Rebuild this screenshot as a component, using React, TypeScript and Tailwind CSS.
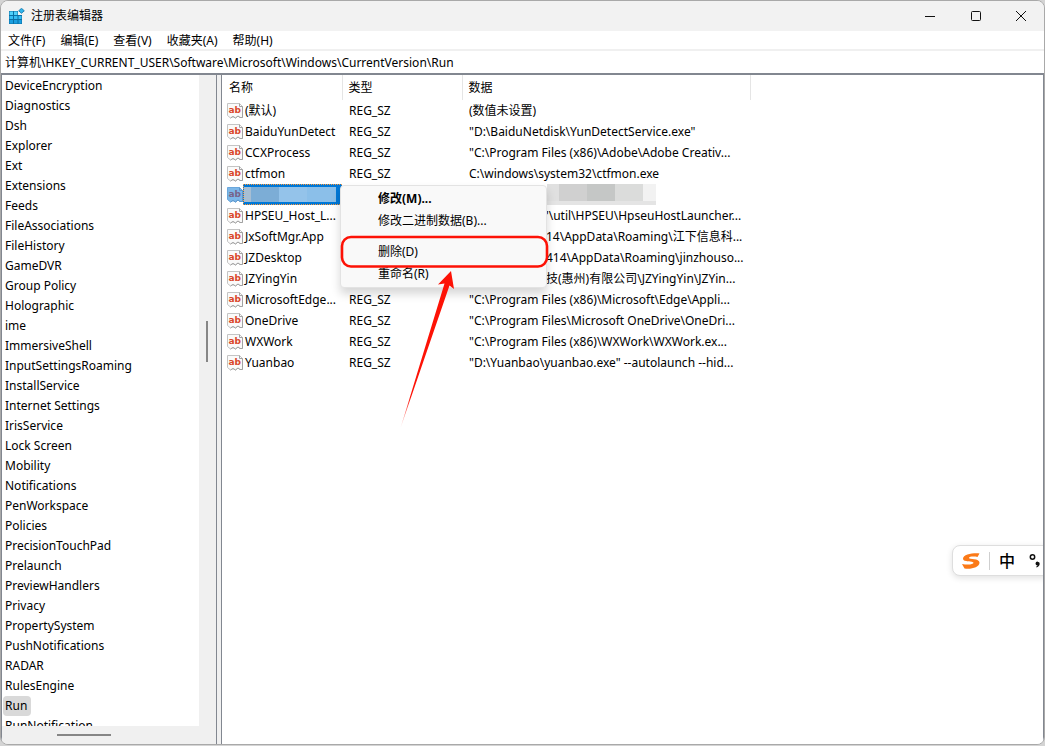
import React from 'react';

const menus = ['文件(F)', '编辑(E)', '查看(V)', '收藏夹(A)', '帮助(H)'];

const keys = [
  'DeviceEncryption', 'Diagnostics', 'Dsh', 'Explorer', 'Ext', 'Extensions', 'Feeds', 'FileAssociations',
  'FileHistory', 'GameDVR', 'Group Policy', 'Holographic', 'ime', 'ImmersiveShell', 'InputSettingsRoaming',
  'InstallService', 'Internet Settings', 'IrisService', 'Lock Screen', 'Mobility', 'Notifications',
  'PenWorkspace', 'Policies', 'PrecisionTouchPad', 'Prelaunch', 'PreviewHandlers', 'Privacy',
  'PropertySystem', 'PushNotifications', 'RADAR', 'RulesEngine', 'Run', 'RunNotification',
];

type Entry = { name: string; type: string; data: string; shifted?: boolean; selected?: boolean };

const entries: Entry[] = [
  { name: '(默认)', type: 'REG_SZ', data: '(数值未设置)' },
  { name: 'BaiduYunDetect', type: 'REG_SZ', data: '"D:\\BaiduNetdisk\\YunDetectService.exe"' },
  { name: 'CCXProcess', type: 'REG_SZ', data: '"C:\\Program Files (x86)\\Adobe\\Adobe Creativ...' },
  { name: 'ctfmon', type: 'REG_SZ', data: 'C:\\windows\\system32\\ctfmon.exe' },
  { name: '', type: '', data: '', selected: true },
  { name: 'HPSEU_Host_L...', type: '', data: "'\\util\\HPSEU\\HpseuHostLauncher...", shifted: true },
  { name: 'JxSoftMgr.App', type: '', data: '14\\AppData\\Roaming\\江下信息科...', shifted: true },
  { name: 'JZDesktop', type: '', data: '414\\AppData\\Roaming\\jinzhouso...', shifted: true },
  { name: 'JZYingYin', type: '', data: '技(惠州)有限公司\\JZYingYin\\JZYin...', shifted: true },
  { name: 'MicrosoftEdge...', type: 'REG_SZ', data: '"C:\\Program Files (x86)\\Microsoft\\Edge\\Appli...' },
  { name: 'OneDrive', type: 'REG_SZ', data: '"C:\\Program Files\\Microsoft OneDrive\\OneDri...' },
  { name: 'WXWork', type: 'REG_SZ', data: '"C:\\Program Files (x86)\\WXWork\\WXWork.ex...' },
  { name: 'Yuanbao', type: 'REG_SZ', data: '"D:\\Yuanbao\\yuanbao.exe" --autolaunch --hid...' },
];

function RegistryIcon() {
  return (
    <svg width="17" height="17" viewBox="0 0 17 17" aria-hidden="true">
      <path d="M1 3h9v4h4v9H1z" fill="#0b6fa4" />
      <path d="M1.500 3.500h3.500v3.500h-3.500zM6 3.500h3.500v3.500H6z" fill="#4fd0fa" />
      <path d="M1.500 8h3.500v3h-3.500zM6 8h3.500v3H6zM10.500 8h3v3h-3z" fill="#35bdf3" />
      <path d="M1.500 12h3.500v3.500h-3.500zM6 12h3.500v3.500H6zM10.500 12h3v3.500h-3z" fill="#1b9fe0" />
      <path d="M13.500 .3l2.800 2.500-2.800 2.500-2.800-2.500z" fill="#2fb5ec" stroke="#0b6fa4" strokeWidth=".8" />
    </svg>
  );
}

function ValueIcon({ selected }: { selected?: boolean }) {
  return (
    <svg width="16" height="17" viewBox="0 0 16 17" className="shrink-0" aria-hidden="true">
      <path
        d="M.5 1.500H12.500L15.500 4.500V15.500L13 15.500 11 14 8.500 16 6 14.500 3.500 16 .5 13.500Z"
        fill={selected ? '#7db7e8' : '#fafafa'}
        stroke={selected ? '#6aa7dc' : '#c4c4c4'}
      />
      <path d="M12.500 1.500v3h3v11l-2.500 0L11 14 8.500 16 6 14.500 3.500 16" fill="none" stroke={selected ? '#5b96cc' : '#a2a2a2'} />
      <text x="1.500" y="11" fontSize="9" fontWeight="700" fontFamily="DejaVu Sans, sans-serif" fill={selected ? '#77638a' : '#d9472b'}>
        ab
      </text>
    </svg>
  );
}

function TitleBar() {
  return (
    <header className="flex h-[30px] shrink-0 items-center bg-[#f2f2f2] pl-[7px]">
      <RegistryIcon />
      <h1 className="ml-[6px] flex-1">注册表编辑器</h1>
      <button type="button" aria-label="最小化" className="flex h-full w-[46px] items-center justify-center">
        <svg width="10" height="10" viewBox="0 0 10 10"><path d="M0 5.500h10" stroke="#111" /></svg>
      </button>
      <button type="button" aria-label="最大化" className="flex h-full w-[45px] items-center justify-center">
        <svg width="10" height="10" viewBox="0 0 10 10"><rect x=".5" y=".5" width="9" height="9" rx="1" fill="none" stroke="#111" /></svg>
      </button>
      <button type="button" aria-label="关闭" className="flex h-full w-[46px] items-center justify-center">
        <svg width="10" height="10" viewBox="0 0 10 10"><path d="M0 0l10 10M10 0L0 10" stroke="#111" /></svg>
      </button>
    </header>
  );
}

function KeyTree() {
  return (
    <nav className="flex w-[216px] shrink-0 flex-col border-x border-[#828790] bg-[#f0f0f0]">
      <div className="flex min-h-0 flex-1">
        <ul className="min-w-0 flex-1 overflow-hidden bg-white pt-px">
          {keys.map((key) => (
            <li key={key} className="flex h-5 pl-px">
              <button type="button" className={`h-5 rounded-sm pl-[2px] pr-1 text-left ${key === 'Run' ? 'bg-[#d9d9d9]' : ''}`}>
                {key}
              </button>
            </li>
          ))}
        </ul>
        <div className="flex w-[17px] flex-col items-center justify-center bg-[#f0f0f0] pr-px pb-[118px]">
          <div className="h-[41px] w-[2px] bg-[#868686]" />
        </div>
      </div>
      <div className="flex h-[18px] shrink-0 items-center pl-[55px]">
        <div className="h-[2px] w-[54px] bg-[#868686]" />
      </div>
    </nav>
  );
}

function ContextMenu() {
  return (
    <div className="absolute left-[118px] top-[110px] h-[103px] w-[207px] rounded-sm border border-[#e3e3e3] bg-[#f9f9f9] pt-[2px] shadow-[0_6px_10px_rgba(0,0,0,0.16)]">
      <button type="button" className="block h-[22px] w-full pl-[37px] text-left font-bold">修改(M)...</button>
      <button type="button" className="block h-[22px] w-full pl-[37px] text-left">修改二进制数据(B)...</button>
      <button type="button" className="mt-[9px] block h-[22px] w-full pl-[37px] text-left">删除(D)</button>
      <button type="button" className="block h-[22px] w-full pl-[37px] text-left">重命名(R)</button>
    </div>
  );
}

function Annotation() {
  return (
    <svg className="pointer-events-none absolute left-[116px] top-[157px]" width="216" height="200" viewBox="338 231 216 200" aria-hidden="true">
      <defs>
        <linearGradient id="tail" x1="0" y1="0" x2="0" y2="1">
          <stop offset="0.8" stopColor="#fd1206" />
          <stop offset="1" stopColor="#fd1206" stopOpacity="0.2" />
        </linearGradient>
      </defs>
      <rect x="342" y="236" width="205" height="29.500" rx="9" fill="none" stroke="#fd1206" strokeWidth="2.600" />
      <path d="M451 270L438 283.500 444.500 282.500L400.500 427L449.500 284.500L454 288Z" fill="url(#tail)" />
    </svg>
  );
}

function ValueRow({ entry }: { entry: Entry }) {
  return (
    <tr className="h-[21px]">
      <td className="p-0">
        <div className="flex h-[21px] items-center pl-[5px]">
          <ValueIcon selected={entry.selected} />
          {entry.selected ? (
            <div className="flex h-[21px] flex-1 border border-dotted border-[#ff9a3c] bg-[#0078d7] pr-[5px] py-[2px]">
              <div className="w-[7px] bg-[#a7bed3]" />
              <div className="w-7 bg-[#7cadd6]" />
              <div className="w-7 bg-[#94c3ea]" />
              <div className="flex-1 bg-[#8bbfe9]" />
            </div>
          ) : (
            <span className="pl-[2px] whitespace-nowrap">{entry.name}</span>
          )}
        </div>
      </td>
      <td className="p-0 pl-[7px]">{entry.type}</td>
      <td className="p-0 pl-[7px]">
        {entry.selected ? (
          <div className="ml-[78px] flex h-[21px] w-[109px] border-b-4 border-[#e4e4e4]">
            <div className="w-3 bg-[#e0e0e0]" />
            <div className="w-7 bg-[#d0d0d0]" />
            <div className="w-7 bg-[#c5c7c6]" />
            <div className="w-7 bg-[#dbdcdb]" />
            <div className="flex-1 bg-[#f2f2f2]" />
          </div>
        ) : (
          <div className={`whitespace-nowrap ${entry.shifted ? 'pl-[77px]' : ''}`}>{entry.data}</div>
        )}
      </td>
    </tr>
  );
}

function InputBar() {
  return (
    <div className="absolute -right-1 bottom-[168px] flex h-[31px] w-[95px] items-center rounded-l-lg border border-[#dedede] bg-white pl-2 shadow-[0_2px_6px_rgba(0,0,0,0.12)]">
      <svg width="20" height="18" viewBox="0 0 20 18" aria-hidden="true">
        <path d="M18.500 1.500C12 .8 2 2.500 2 6.800C2 10.500 12.500 8.800 12.500 10.800C12.500 12.800 6 13 1 12L3.500 16.500C10 17.500 18.500 15.500 18.500 10.500C18.500 6.300 8 7.500 8 6C8 4.500 13 4.200 16.500 5Z" fill="#fb7a18" />
      </svg>
      <span className="ml-2 h-[18px] w-px bg-[#cfcfcf]" />
      <button type="button" className="ml-[9px] text-base font-medium">中</button>
      <svg className="ml-[14px]" width="12" height="16" viewBox="0 0 12 16" aria-hidden="true">
        <circle cx="3.500" cy="4" r="2.200" fill="none" stroke="#111" strokeWidth="1.500" />
        <path d="M6.500 10.500a2.100 2.100 0 1 1 4.200 .5C10.500 13 9 14 7.500 14.500L7.200 13.600C8.200 13.200 8.500 12.900 8.500 12.500A2 2 0 0 1 6.500 10.500z" fill="#111" />
      </svg>
    </div>
  );
}

export default function App() {
  return (
    <div className="h-screen bg-[#d4d4d4] pb-px font-['Noto_Sans','Noto_Sans_CJK_SC',sans-serif] text-[12px] leading-5 text-black">
      <div className="flex h-full flex-col overflow-hidden rounded-lg border border-[#a9a9a9] bg-[#f0f0f0]">
        <TitleBar />
        <div className="flex h-[18px] shrink-0 items-center gap-[15px] bg-white pt-[2px] pl-[7px]">
          {menus.map((menu) => (
            <button key={menu} type="button">{menu}</button>
          ))}
        </div>
        <input
          aria-label="地址"
          defaultValue="计算机\HKEY_CURRENT_USER\Software\Microsoft\Windows\CurrentVersion\Run"
          className="mt-[2px] h-[22px] w-full shrink-0 bg-white px-1 outline-none"
        />
        <main className="flex min-h-0 flex-1 border-t-2 border-[#828790]">
          <KeyTree />
          <section className="relative ml-1 min-w-0 flex-1 overflow-hidden border-x border-[#828790] bg-white">
            <table className="w-[528px] table-fixed border-collapse text-left">
              <colgroup>
                <col className="w-[120px]" />
                <col className="w-[120px]" />
                <col className="w-[288px]" />
              </colgroup>
              <thead>
                <tr className="h-[25px]">
                  <th className="border-r border-[#e5e5e5] p-0 pl-[7px] font-normal">名称</th>
                  <th className="border-r border-[#e5e5e5] p-0 pl-[6px] font-normal">类型</th>
                  <th className="border-r border-[#e5e5e5] p-0 pl-[6px] font-normal">数据</th>
                </tr>
              </thead>
              <tbody>
                {entries.map((entry, index) => (
                  <ValueRow key={index} entry={entry} />
                ))}
              </tbody>
            </table>
            <ContextMenu />
            <Annotation />
            <InputBar />
          </section>
        </main>
      </div>
    </div>
  );
}
